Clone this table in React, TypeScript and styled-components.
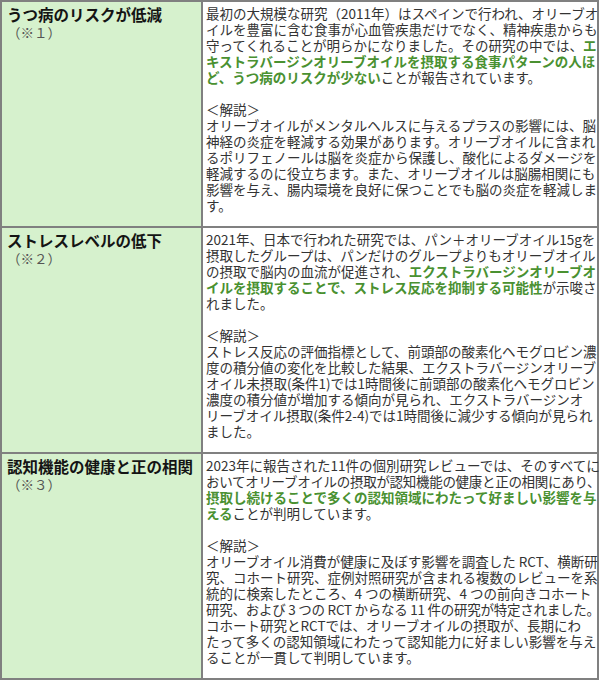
import React from "react";
import styled, { createGlobalStyle } from "styled-components";

const GlobalStyle = createGlobalStyle`
  html, body {
    margin: 0;
    padding: 0;
    background: #ffffff;
    overflow: hidden;
  }
  body {
    font-family: "Noto Sans CJK JP", "Noto Sans", sans-serif;
  }
`;

const Table = styled.div`
  display: grid;
  grid-template-columns: 199px 394px;
  grid-auto-rows: 224px;
  gap: 2px;
  width: 599px;
  box-sizing: border-box;
  background: #808080;
  border: 2px solid #808080;
`;

const LabelCell = styled.div`
  background: #d6f1cd;
  padding: 3px 4px 0 5px;
`;

const Title = styled.div`
  font-size: 15.5px;
  line-height: 18px;
  font-weight: 700;
  color: #141414;
  white-space: nowrap;
`;

const Note = styled.div`
  font-size: 13.5px;
  line-height: 18px;
  color: #555555;
`;

const BodyCell = styled.div`
  background: #ffffff;
  padding: 3px 0 0 3px;
  font-size: 13.5px;
  line-height: 16px;
  color: #333333;
`;

const Line = styled.div<{ $spacing?: number }>`
  display: block;
  min-height: 16px;
  white-space: nowrap;
  letter-spacing: ${(p) => `${p.$spacing ?? 0}px`};
`;

const Em = styled.span`
  color: #4a9131;
  font-weight: 700;
`;

type Seg = string | { em: string };
type LineData = { segs: Seg[]; spacing?: number };

const L = (...segs: Seg[]): LineData => ({ segs });
const T = (spacing: number, ...segs: Seg[]): LineData => ({ segs, spacing });

const rows: { title: string; note: string; lines: LineData[] }[] = [
  {
    title: "うつ病のリスクが低減",
    note: "（※１）",
    lines: [
      L("最初の大規模な研究（2011年）はスペインで行われ、オリーブオ"),
      L("イルを豊富に含む食事が心血管疾患だけでなく、精神疾患からも"),
      L("守ってくれることが明らかになりました。その研究の中では、", { em: "エ" }),
      L({ em: "キストラバージンオリーブオイルを摂取する食事パターンの人ほ" }),
      L({ em: "ど、うつ病のリスクが少ない" }, "ことが報告されています。"),
      L(),
      L("＜解説＞"),
      L("オリーブオイルがメンタルヘルスに与えるプラスの影響には、脳"),
      L("神経の炎症を軽減する効果があります。オリーブオイルに含まれ"),
      L("るポリフェノールは脳を炎症から保護し、酸化によるダメージを"),
      L("軽減するのに役立ちます。また、オリーブオイルは脳腸相関にも"),
      L("影響を与え、腸内環境を良好に保つことでも脳の炎症を軽減しま"),
      L("す。"),
    ],
  },
  {
    title: "ストレスレベルの低下",
    note: "（※２）",
    lines: [
      L("2021年、日本で行われた研究では、パン＋オリーブオイル15gを"),
      L("摂取したグループは、パンだけのグループよりもオリーブオイル"),
      L("の摂取で脳内の血流が促進され、", { em: "エクストラバージンオリーブオ" }),
      L({ em: "イルを摂取することで、ストレス反応を抑制する可能性" }, "が示唆さ"),
      L("れました。"),
      L(),
      L("＜解説＞"),
      L("ストレス反応の評価指標として、前頭部の酸素化ヘモグロビン濃"),
      L("度の積分値の変化を比較した結果、エクストラバージンオリーブ"),
      L("オイル未摂取(条件1)では1時間後に前頭部の酸素化ヘモグロビン"),
      L("濃度の積分値が増加する傾向が見られ、エクストラバージンオ"),
      L("リーブオイル摂取(条件2-4)では1時間後に減少する傾向が見られ"),
      L("ました。"),
    ],
  },
  {
    title: "認知機能の健康と正の相関",
    note: "（※３）",
    lines: [
      L("2023年に報告された11件の個別研究レビューでは、そのすべてに"),
      T(-0.3, "おいてオリーブオイルの摂取が認知機能の健康と正の相関にあり、"),
      L({ em: "摂取し続けることで多くの認知領域にわたって好ましい影響を与" }),
      L({ em: "える" }, "ことが判明しています。"),
      L(),
      L("＜解説＞"),
      L("オリーブオイル消費が健康に及ぼす影響を調査した RCT、横断研"),
      L("究、コホート研究、症例対照研究が含まれる複数のレビューを系"),
      L("統的に検索したところ、4 つの横断研究、4 つの前向きコホート"),
      T(-0.25, "研究、および 3 つの RCT からなる 11 件の研究が特定されました。"),
      L("コホート研究とRCTでは、オリーブオイルの摂取が、長期にわ"),
      L("たって多くの認知領域にわたって認知能力に好ましい影響を与え"),
      L("ることが一貫して判明しています。"),
    ],
  },
];

export default function App() {
  return (
    <>
      <GlobalStyle />
      <Table>
        {rows.map((row) => (
          <React.Fragment key={row.title}>
            <LabelCell>
              <Title>{row.title}</Title>
              <Note>{row.note}</Note>
            </LabelCell>
            <BodyCell>
              {row.lines.map((line, i) => (
                <Line key={i} $spacing={line.spacing}>
                  {line.segs.map((s, j) =>
                    typeof s === "string" ? (
                      <React.Fragment key={j}>{s}</React.Fragment>
                    ) : (
                      <Em key={j}>{s.em}</Em>
                    )
                  )}
                </Line>
              ))}
            </BodyCell>
          </React.Fragment>
        ))}
      </Table>
    </>
  );
}
